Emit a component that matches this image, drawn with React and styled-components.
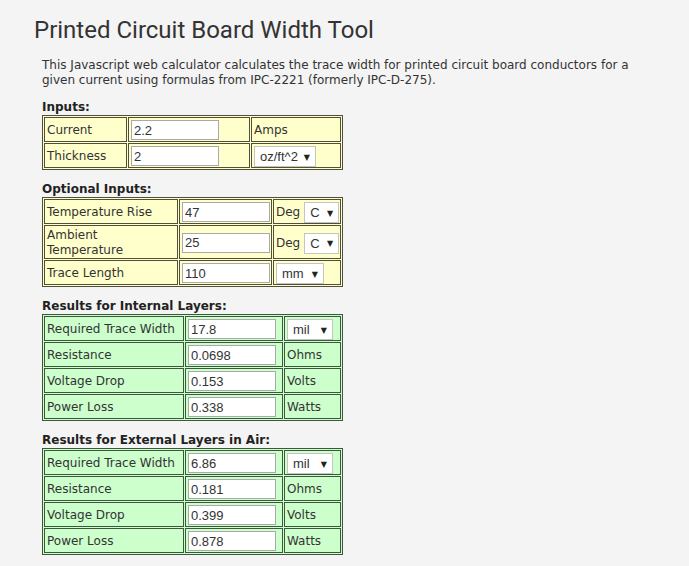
import React from 'react';
import styled, { createGlobalStyle } from 'styled-components';

const GlobalStyle = createGlobalStyle`
  body {
    margin: 0;
    background: #f4f4f4;
    font-family: "DejaVu Sans", Verdana, sans-serif;
    color: #333;
  }
`;

const tones = {
  yellow: { bg: '#ffffcc', line: '#4f4f3c' },
  green: { bg: '#ccffcc', line: '#3c573c' },
};

const sections = [
  {
    title: 'Inputs:',
    tone: 'yellow',
    cols: [83, 122, 90],
    rows: [
      { label: 'Current', value: '2.2', unit: 'Amps' },
      { label: 'Thickness', value: '2', select: { value: 'oz/ft^2', options: ['oz/ft^2', 'mil', 'µm'], w: 62 } },
    ],
  },
  {
    title: 'Optional Inputs:',
    tone: 'yellow',
    cols: [134, 93, 68],
    rows: [
      { label: 'Temperature Rise', value: '47', unit: 'Deg', select: { value: 'C', options: ['C', 'F'], w: 35 } },
      { label: ['Ambient', 'Temperature'], value: '25', unit: 'Deg', select: { value: 'C', options: ['C', 'F'], w: 35 } },
      { label: 'Trace Length', value: '110', select: { value: 'mm', options: ['mm', 'mil', 'in'], w: 48 } },
    ],
  },
  {
    title: 'Results for Internal Layers:',
    tone: 'green',
    cols: [140, 98, 57],
    rows: [
      { label: 'Required Trace Width', value: '17.8', select: { value: 'mil', options: ['mil', 'mm', 'µm'], w: 46 } },
      { label: 'Resistance', value: '0.0698', unit: 'Ohms' },
      { label: 'Voltage Drop', value: '0.153', unit: 'Volts' },
      { label: 'Power Loss', value: '0.338', unit: 'Watts' },
    ],
  },
  {
    title: 'Results for External Layers in Air:',
    tone: 'green',
    cols: [140, 98, 57],
    rows: [
      { label: 'Required Trace Width', value: '6.86', select: { value: 'mil', options: ['mil', 'mm', 'µm'], w: 46 } },
      { label: 'Resistance', value: '0.181', unit: 'Ohms' },
      { label: 'Voltage Drop', value: '0.399', unit: 'Volts' },
      { label: 'Power Loss', value: '0.878', unit: 'Watts' },
    ],
  },
];

const App = () => {
  return (
    <>
      <GlobalStyle />
      <Page>
        <Title>Printed Circuit Board Width Tool</Title>
        <Content>
          <Intro>
            This Javascript web calculator calculates the trace width for printed circuit board conductors for a
            given current using formulas from IPC-2221 (formerly IPC-D-275).
          </Intro>
          {sections.map((section) => (
            <Section key={section.title}>
              <SectionTitle>{section.title}</SectionTitle>
              <CalcTable $tone={section.tone}>
                <colgroup>
                  {section.cols.map((w, i) => (
                    <Col key={i} $w={w} />
                  ))}
                </colgroup>
                <tbody>
                  {section.rows.map((row, i) => (
                    <tr key={i}>
                      <Cell $tone={section.tone}>
                        {Array.isArray(row.label) ? (
                          <>
                            {row.label[0]}
                            <br />
                            {row.label[1]}
                          </>
                        ) : (
                          row.label
                        )}
                      </Cell>
                      <Cell $tone={section.tone}>
                        <Field type="text" defaultValue={row.value} />
                      </Cell>
                      <Cell $tone={section.tone}>
                        {row.unit && <Unit>{row.unit}</Unit>}
                        {row.select && (
                          <SelectWrap>
                            <Select $w={row.select.w} defaultValue={row.select.value}>
                              {row.select.options.map((o) => (
                                <option key={o}>{o}</option>
                              ))}
                            </Select>
                          </SelectWrap>
                        )}
                      </Cell>
                    </tr>
                  ))}
                </tbody>
              </CalcTable>
            </Section>
          ))}
        </Content>
      </Page>
    </>
  );
};

const Page = styled.div`
  padding: 16px 0 0 34px;
`;

const Title = styled.h1`
  margin: 0;
  font-family: Roboto, "Open Sans", sans-serif;
  font-size: 24px;
  font-weight: 400;
  line-height: 28px;
  color: #333;
`;

const Content = styled.div`
  margin-left: 8px;
`;

const Intro = styled.p`
  margin: 14px 0 0;
  max-width: 610px;
  font-size: 12px;
  line-height: 15px;
`;

const Section = styled.div`
  margin-top: 12px;
`;

const SectionTitle = styled.div`
  font-size: 12px;
  font-weight: bold;
  line-height: 15px;
  color: #222;
`;

const CalcTable = styled.table`
  table-layout: fixed;
  width: 301px;
  border-collapse: separate;
  border-spacing: 1px;
  border: 1px solid ${(props) => tones[props.$tone].line};
  background: ${(props) => tones[props.$tone].bg};
`;

const Col = styled.col`
  width: ${(props) => props.$w}px;
`;

const Cell = styled.td`
  box-sizing: border-box;
  height: 25px;
  padding: 2px 2px 0;
  border: 1px solid ${(props) => tones[props.$tone].line};
  font-size: 12px;
  line-height: 15px;
  vertical-align: middle;
  white-space: nowrap;
`;

const Field = styled.input`
  box-sizing: border-box;
  display: block;
  width: 88px;
  height: 20px;
  margin: 0 0 1px;
  padding: 0 2px;
  border: 1px solid #a9a9a9;
  background: #fff;
  font-family: "Liberation Sans", Arial, sans-serif;
  font-size: 13px;
  color: #333;
`;

const Unit = styled.span`
  margin-right: 4px;
`;

const SelectWrap = styled.span`
  position: relative;
  display: inline-block;
  vertical-align: middle;
  &::after {
    content: '▼';
    position: absolute;
    right: 6px;
    top: 50%;
    transform: translateY(-50%);
    font-family: "DejaVu Sans", sans-serif;
    font-size: 8px;
    color: #222;
    pointer-events: none;
  }
`;

const Select = styled.select`
  box-sizing: border-box;
  appearance: none;
  display: block;
  width: ${(props) => props.$w}px;
  height: 21px;
  margin: 0;
  padding: 0 0 0 5px;
  border: 1px solid #c4c4c4;
  border-radius: 0;
  background: #fff;
  font-family: "Liberation Sans", Arial, sans-serif;
  font-size: 13px;
  color: #333;
`;

export default App;
